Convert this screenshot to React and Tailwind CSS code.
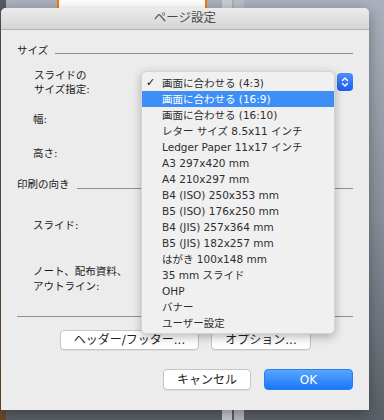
import React from "react";

const items = [
  "画面に合わせる (4:3)",
  "画面に合わせる (16:9)",
  "画面に合わせる (16:10)",
  "レター サイズ 8.5x11 インチ",
  "Ledger Paper 11x17 インチ",
  "A3 297x420 mm",
  "A4 210x297 mm",
  "B4 (ISO) 250x353 mm",
  "B5 (ISO) 176x250 mm",
  "B4 (JIS) 257x364 mm",
  "B5 (JIS) 182x257 mm",
  "はがき 100x148 mm",
  "35 mm スライド",
  "OHP",
  "バナー",
  "ユーザー設定",
];

const font = { fontFamily: '"DejaVu Sans", "Noto Sans CJK JP", sans-serif' };

const SizeMenu = () => (
  <div className="absolute left-[140px] top-[63px] w-[194px] h-[263px] rounded-[5px] bg-[#f0f0f0] border border-[#d4d4d4] shadow-[0_3px_10px_rgba(0,0,0,0.28)] pt-[3px] text-[10.5px] text-[#2e2e2e]">
    {items.map((t, i) => (
      <div
        key={t}
        className={
          "relative h-[16px] leading-[16px] pl-[20px] whitespace-nowrap " +
          (i === 1 ? "bg-[#3d8ef7] text-white" : "")
        }
      >
        {i === 0 && <span className="absolute left-[4px] top-0 text-[11px] font-bold text-[#111]">✓</span>}
        {t}
      </div>
    ))}
  </div>
);

const Stepper = () => (
  <div className="w-[16px] h-[18px] rounded-[4px] bg-gradient-to-b from-[#4f8ffb] to-[#1c5cf2] flex items-center justify-center">
    <svg width="8" height="12" viewBox="0 0 8 12" fill="none" stroke="white" strokeWidth="1.4" strokeLinecap="round" strokeLinejoin="round">
      <path d="M1.5 4.5 L4 2 L6.5 4.5" />
      <path d="M1.5 7.5 L4 10 L6.5 7.5" />
    </svg>
  </div>
);

const Button = ({ children, className }) => (
  <div
    className={
      "flex items-center justify-center rounded-[4px] bg-white border border-[#c6c6c6] shadow-[0_1px_0_rgba(0,0,0,0.06)] text-[12px] text-[#1e1e1e] " +
      className
    }
  >
    {children}
  </div>
);

const Dialog = () => (
  <div
    className="absolute left-[1px] top-[8px] w-[368px] h-[402px] rounded-t-[5px] bg-[#ececec] shadow-[0_4px_14px_rgba(0,0,0,0.35)] flex flex-col"
    style={font}
  >
    <div className="h-[22px] rounded-t-[5px] bg-gradient-to-b from-[#ebebeb] to-[#d5d5d5] border-b border-[#b3b3b3] flex items-center justify-center text-[12.5px] text-[#4a4a4a]">
      ページ設定
    </div>
    <div className="flex flex-col pl-[16px] pr-[16px] text-[10.5px] text-[#1a1a1a]">
      <div className="mt-[13px] h-[16px] flex items-center">
        <span>サイズ</span>
        <div className="ml-[7px] mt-[4px] flex-1 h-px bg-[#8e8e8e]" />
      </div>
      <div className="mt-[9px] h-[28px] flex justify-between">
        <div className="ml-[17px] leading-[14px]">
          スライドの
          <br />
          サイズ指定:
        </div>
        <div className="mt-[5px]">
          <Stepper />
        </div>
      </div>
      <div className="mt-[16px] ml-[16px] h-[14px] leading-[14px]">幅:</div>
      <div className="mt-[20px] ml-[16px] h-[14px] leading-[14px]">高さ:</div>
      <div className="mt-[17px] h-[16px] flex items-center">
        <span>印刷の向き</span>
        <div className="ml-[7px] mt-[6px] flex-1 h-px bg-[#8e8e8e]" />
      </div>
      <div className="mt-[25px] ml-[16px] h-[14px] leading-[14px]">スライド:</div>
      <div className="mt-[32px] ml-[16px] h-[30px] leading-[15px]">
        ノート、配布資料、
        <br />
        アウトライン:
      </div>
      <div className="mt-[22px] h-px bg-[#8e8e8e]" />
      <div className="mt-[13px] flex pl-[43px] gap-[12px]">
        <Button className="w-[139px] h-[20px]">ヘッダー/フッター...</Button>
        <Button className="w-[100px] h-[20px]">オプション...</Button>
      </div>
      <div className="mt-[19px] flex justify-end gap-[13px]">
        <Button className="w-[88px] h-[21px]">キャンセル</Button>
        <div className="w-[89px] h-[21px] rounded-[4px] bg-gradient-to-b from-[#58a6fd] to-[#1677f7] border border-[#2a7ff0] flex items-center justify-center text-[12px] text-white">
          OK
        </div>
      </div>
    </div>
    <SizeMenu />
  </div>
);

export default function App() {
  return (
    <div className="relative w-[384px] h-[420px] overflow-hidden bg-gradient-to-b from-[#aab0bc] via-[#8a909b] to-[#5b6068]">
      <div className="absolute left-0 top-0 w-[6px] h-[420px] bg-gradient-to-b from-[#555a63] to-[#6a4a2a]" />
      <div className="absolute left-[57px] top-0 w-[150px] h-[30px] bg-white border-x-[2px] border-[#f57d00]" />
      <div className="absolute left-[222px] top-0 w-[22px] h-[420px] flex gap-[2px]">
        <div className="flex-1 bg-[#c9ccd2]" />
        <div className="flex-1 bg-[#b9bcc3]" />
      </div>
      <Dialog />
    </div>
  );
}
